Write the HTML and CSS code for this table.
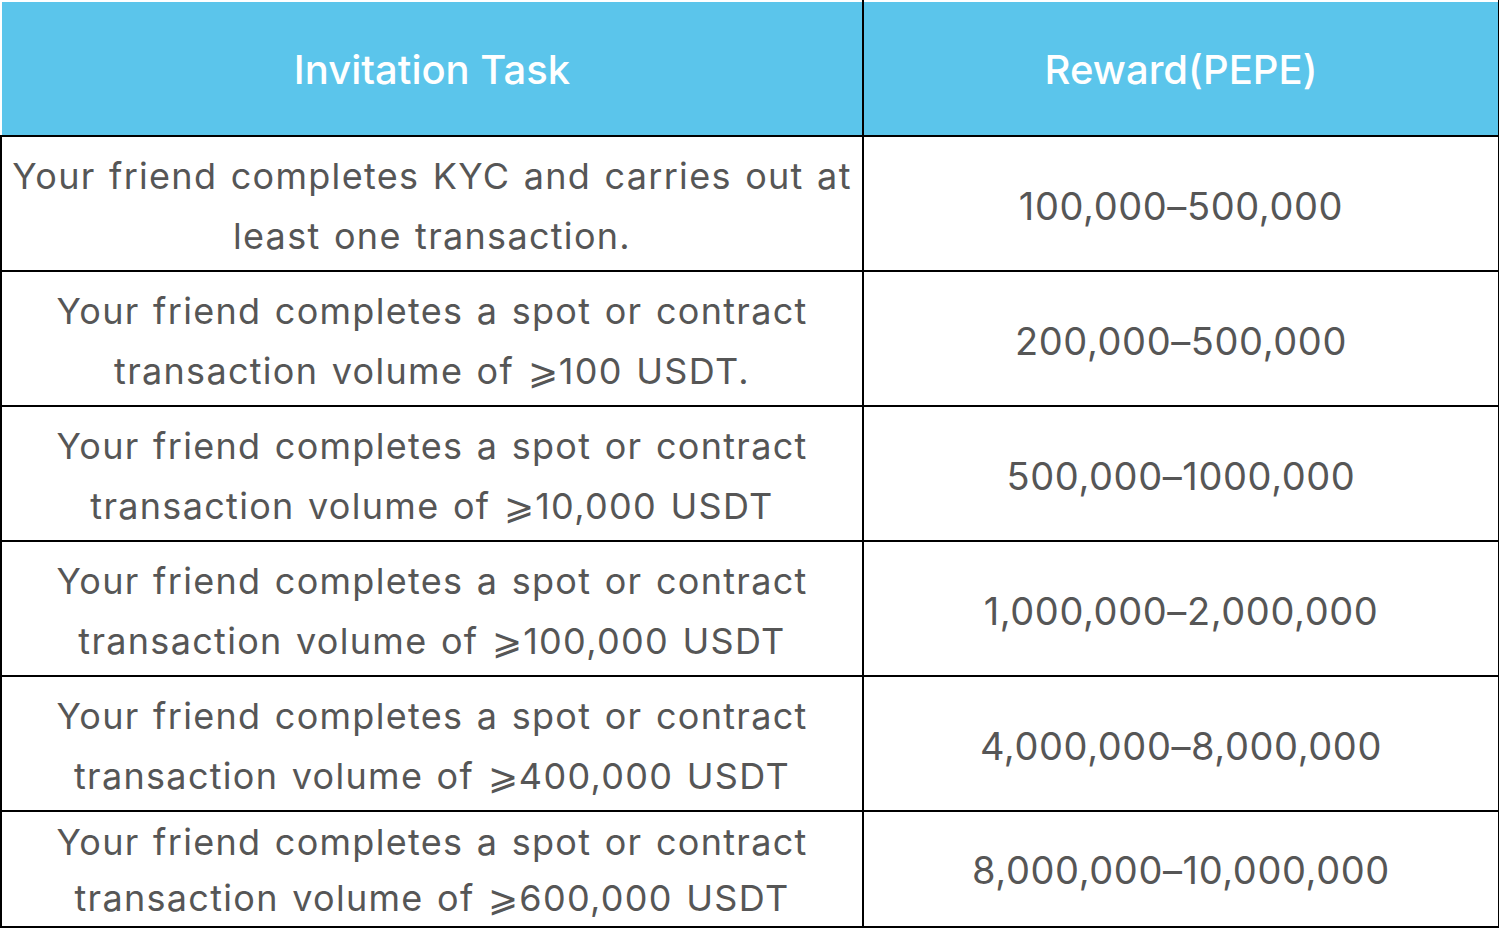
FILE: index.html
```html
<!DOCTYPE html>
<html lang="en">
<head>
<meta charset="utf-8">
<title>Invitation Rewards</title>
<link rel="stylesheet" href="styles.css">
</head>
<body>
<table class="rewards">
  <colgroup>
    <col class="col-task">
    <col class="col-reward">
  </colgroup>
  <thead>
    <tr>
      <th class="head head-first">Invitation Task</th>
      <th class="head">Reward(PEPE)</th>
    </tr>
  </thead>
  <tbody>
    <tr>
      <td class="task">Your friend completes KYC and carries out at least one transaction.</td>
      <td class="reward">100,000–500,000</td>
    </tr>
    <tr>
      <td class="task">Your friend completes a spot or contract transaction volume of ⩾100 USDT.</td>
      <td class="reward">200,000–500,000</td>
    </tr>
    <tr>
      <td class="task">Your friend completes a spot or contract transaction volume of ⩾10,000 USDT</td>
      <td class="reward">500,000–1000,000</td>
    </tr>
    <tr>
      <td class="task">Your friend completes a spot or contract transaction volume of ⩾100,000 USDT</td>
      <td class="reward">1,000,000–2,000,000</td>
    </tr>
    <tr>
      <td class="task">Your friend completes a spot or contract transaction volume of ⩾400,000 USDT</td>
      <td class="reward">4,000,000–8,000,000</td>
    </tr>
    <tr class="last">
      <td class="task">Your friend completes a spot or contract transaction volume of ⩾600,000 USDT</td>
      <td class="reward">8,000,000–10,000,000</td>
    </tr>
  </tbody>
</table>
</body>
</html>
```

FILE: styles.css
```css
html, body {
  margin: 0;
  padding: 0;
  background: #ffffff;
}

body {
  font-family: Inter, "Noto Sans", sans-serif;
  color: #565656;
}

.rewards {
  width: 1498px;
  border-collapse: collapse;
  table-layout: fixed;
}

.col-task {
  width: 862px;
}

.col-reward {
  width: 636px;
}

.rewards th,
.rewards td {
  border: 2px solid #000000;
  text-align: center;
  vertical-align: middle;
  padding: 4px 4px 0;
  font-size: 36px;
  line-height: 60px;
  letter-spacing: 1.3px;
  word-spacing: 2px;
  font-weight: 400;
}

.head {
  height: 131px;
  background: #5bc5eb;
  color: #ffffff;
  font-size: 40px !important;
  font-weight: 500 !important;
  letter-spacing: 0 !important;
  word-spacing: 0 !important;
  padding-top: 2px !important;
  border-top-color: #ffffff !important;
}

.head-first {
  border-left-color: #ffffff !important;
}

.task,
.reward {
  height: 129px;
}

.reward {
  font-size: 38px !important;
  letter-spacing: 0.6px !important;
}

.last .task,
.last .reward {
  height: 111px;
  padding-top: 2px;
  line-height: 56px;
}
```
